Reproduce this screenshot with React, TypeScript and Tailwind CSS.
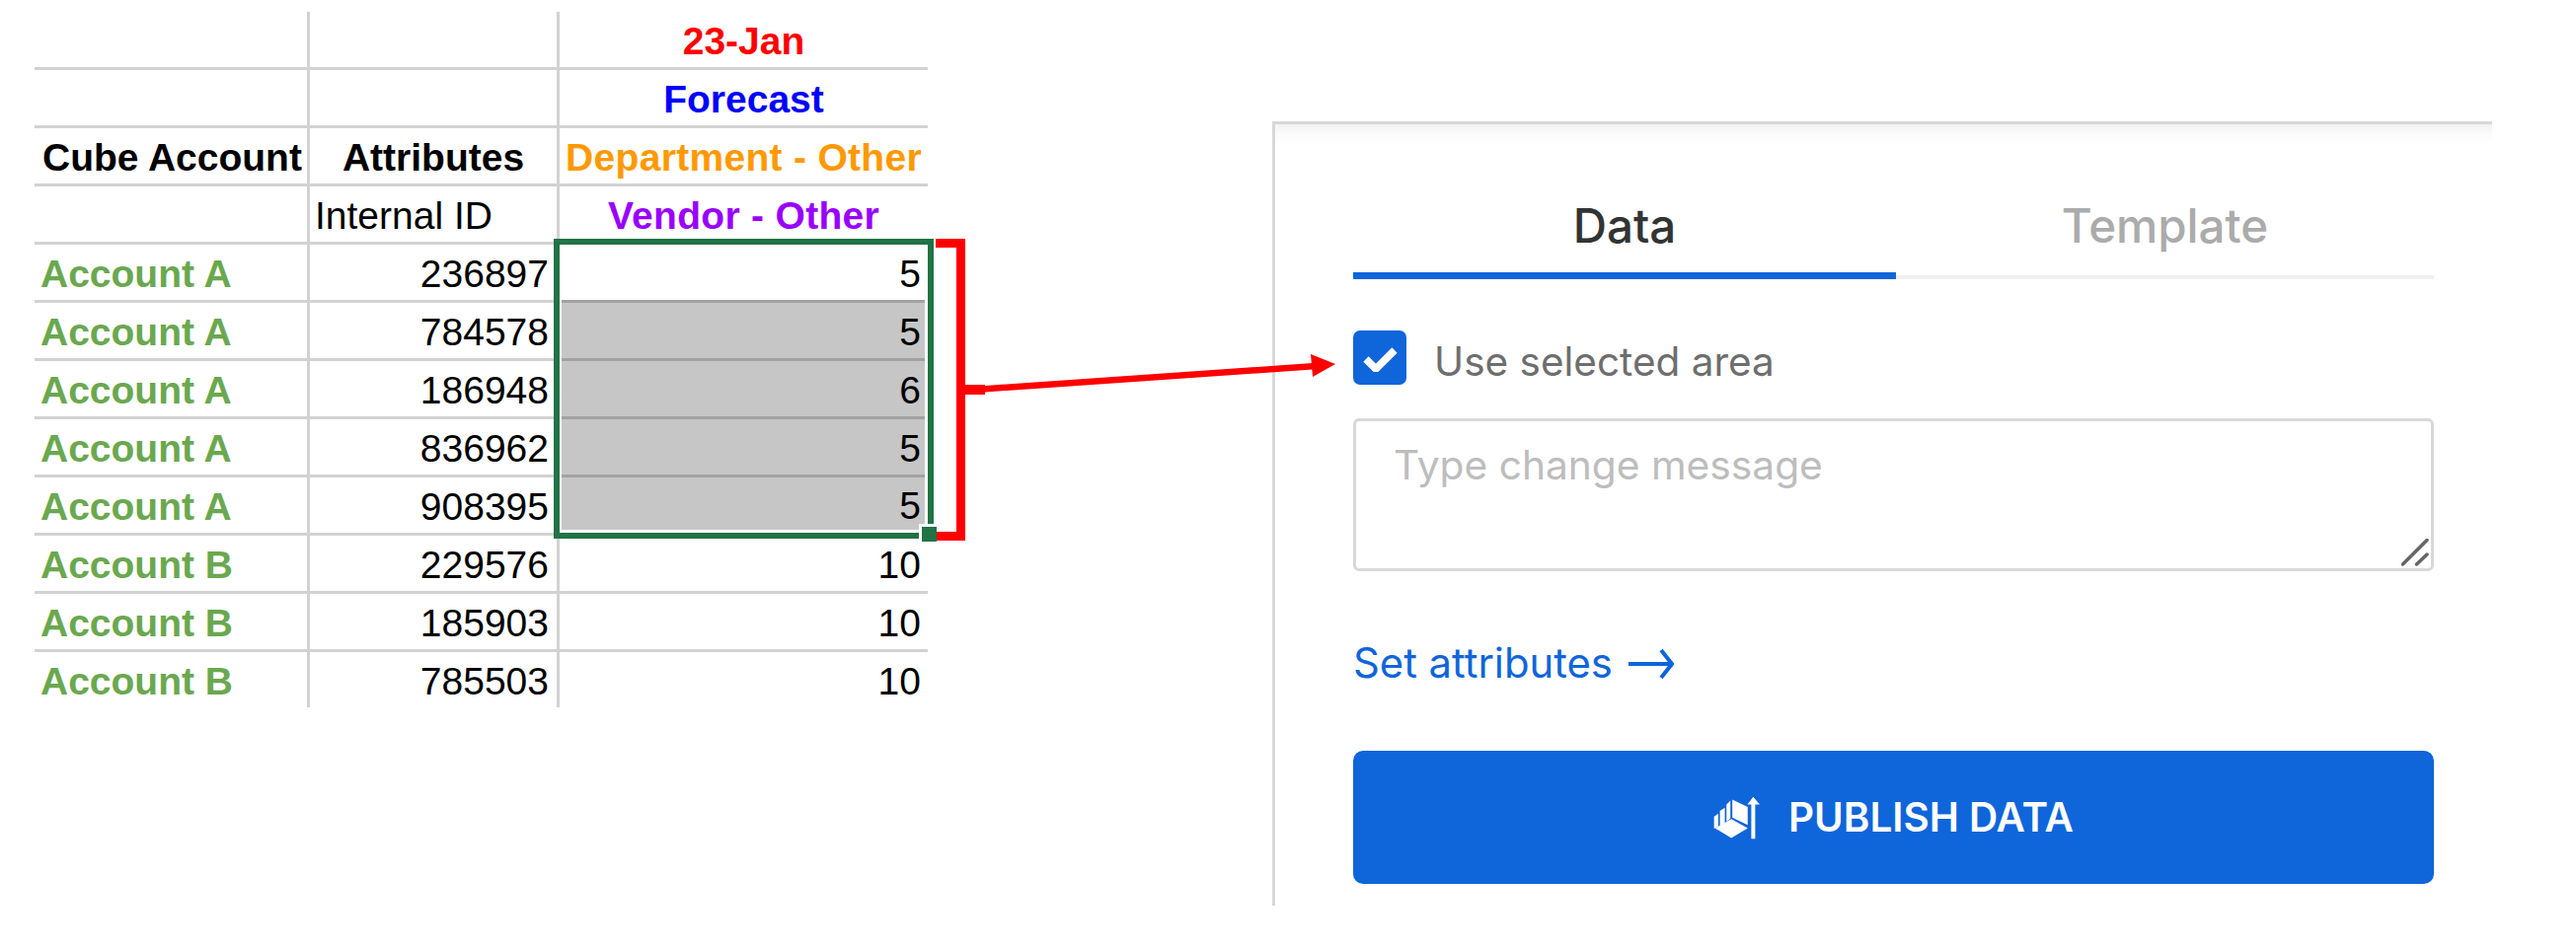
import React from "react";

const rows: [string, string, string][] = [
  ["Account A", "236897", "5"],
  ["Account A", "784578", "5"],
  ["Account A", "186948", "6"],
  ["Account A", "836962", "5"],
  ["Account A", "908395", "5"],
  ["Account B", "229576", "10"],
  ["Account B", "185903", "10"],
  ["Account B", "785503", "10"],
];

const line = "border-[#d2d2d2]";

function PublishIcon() {
  return (
    <svg width="48" height="44" viewBox="110 80 145 132" fill="#fff" aria-hidden="true">
      <polygon points="112,142 125,133 125,172 112,179" />
      <polygon points="130,125 145,115 145,162 130,170" />
      <polygon points="150,105 162,93 162,148 150,158" />
      <polygon points="168,90 215,113 215,168 168,145" />
      <polygon points="115,178 165,150 215,178 165,208" />
      <polygon points="226,105 214,105 232,82 252,105 238,105 238,210 226,210" />
    </svg>
  );
}

export default function App() {
  return (
    <div className="flex items-start w-[2610px] h-[964px] bg-white overflow-hidden font-['Liberation_Sans',Arial,sans-serif]">
      {/* Spreadsheet */}
      <div className="relative ml-[35px] mt-[12px] w-[905px] shrink-0 text-[39px] text-black">
        <div className="grid grid-cols-[279px_253px_373px]">
          {/* Row 1 */}
          <div className={`h-[59px] border-b-[3px] border-r-[3px] ${line}`} />
          <div className={`h-[59px] border-b-[3px] border-r-[3px] ${line}`} />
          <div className={`h-[59px] pt-[5px] border-b-[3px] ${line} flex items-center justify-center font-bold text-[#ff0000]`}>23-Jan</div>
          {/* Row 2 */}
          <div className={`h-[59px] border-b-[3px] border-r-[3px] ${line}`} />
          <div className={`h-[59px] border-b-[3px] border-r-[3px] ${line}`} />
          <div className={`h-[59px] pt-[5px] border-b-[3px] ${line} flex items-center justify-center font-bold text-[#0000ff]`}>Forecast</div>
          {/* Row 3 */}
          <div className={`h-[59px] pt-[5px] border-b-[3px] border-r-[3px] ${line} flex items-center pl-[8px] font-bold whitespace-nowrap`}>Cube Account</div>
          <div className={`h-[59px] pt-[5px] border-b-[3px] border-r-[3px] ${line} flex items-center justify-center font-bold`}>Attributes</div>
          <div className={`h-[59px] pt-[5px] border-b-[3px] ${line} flex items-center justify-center font-bold tracking-[0.3px] text-[#ff9900] whitespace-nowrap`}>Department - Other</div>
          {/* Row 4 */}
          <div className={`h-[59px] border-b-[3px] border-r-[3px] ${line}`} />
          <div className={`h-[59px] pt-[5px] border-b-[3px] border-r-[3px] ${line} flex items-center pl-[5px]`}>Internal ID</div>
          <div className={`h-[59px] pt-[5px] border-b-[3px] ${line} flex items-center justify-center font-bold tracking-[0.3px] text-[#9900ff]`}>Vendor - Other</div>
          {/* Data */}
          {rows.map(([account, id, value], i) => {
            const last = i === rows.length - 1;
            const selected = i < 5;
            const h = last ? "h-[56px] pt-[5px]" : "h-[59px] pt-[5px] border-b-[3px]";
            return (
              <React.Fragment key={i}>
                <div className={`${h} border-r-[3px] ${line} flex items-center pl-[6px] font-bold text-[#6aa84f]`}>{account}</div>
                <div className={`${h} border-r-[3px] ${line} flex items-center justify-end pr-[8px]`}>{id}</div>
                {selected ? (
                  <div className={`h-[59px] pl-[2px] pr-[3px] ${i === 4 ? "pb-[6px]" : ""}`}>
                    <div className={`h-full pt-[5px] flex items-center justify-end pr-[4px] ${i === 0 ? "bg-white" : "bg-[#c6c6c6]"} ${i < 4 ? "border-b-[3px] border-[#a2a2a2]" : ""}`}>{value}</div>
                  </div>
                ) : (
                  <div className={`${h} ${line} flex items-center justify-end pr-[7px]`}>{value}</div>
                )}
              </React.Fragment>
            );
          })}
        </div>

        {/* Selection rectangle, handle, bracket, arrow */}
        <div className="absolute left-[526px] top-[230px] w-[385px] h-[304px] border-[6px] border-[#217346]" />
        <div className="absolute left-[913px] top-[230px] w-[30px] h-[306px] border-y-[9px] border-r-[9px] border-[#ff0000]" />
        <div className="absolute left-[896px] top-[519px] w-[18px] h-[18px] bg-[#217346] border-l-[3px] border-t-[3px] border-white" />
        <svg className="absolute left-[943px] top-[338px] z-10 overflow-visible" width="380" height="60" viewBox="978 350 380 60" fill="#ff0000" aria-hidden="true">
          <rect x="978" y="390" width="20" height="10" />
          <polygon points="998,391 1330,368 1330,374.5 998,397.5" />
          <polygon points="1328,359 1353,369 1330,382" />
        </svg>
      </div>

      {/* Panel */}
      <div className="relative ml-[349px] mt-[123px] w-[1236px] h-[795px] shrink-0 border-l-[3px] border-t-[3px] border-[#d8d8d8] pl-[79px] pr-[59px] font-['Inter',sans-serif] shadow-[inset_0_24px_22px_-24px_rgba(0,0,0,0.1)]">
        {/* Tabs */}
        <div className="flex mt-[58px] h-[99px] text-[47.5px] font-medium leading-none">
          <div className="w-[550px] h-full flex items-start justify-center pt-[21px] text-[#333333] border-b-[7px] border-[#0f65da]">Data</div>
          <div className="flex-1 h-full flex items-start justify-center pt-[21px] text-[#ababab] border-b-[4px] border-[#f0f0f0]">Template</div>
        </div>

        {/* Checkbox */}
        <div className="flex items-center mt-[52px] gap-[28px]">
          <div className="w-[54px] h-[55px] rounded-[7px] bg-[#0f65da] flex items-center justify-center">
            <svg width="36" height="28" viewBox="0 0 36 28" fill="none" aria-hidden="true">
              <polyline points="4,15 14,25 33,6" stroke="#fff" strokeWidth="7.5" />
            </svg>
          </div>
          <span className="pt-[10px] text-[40.5px] text-[#6e6e6e] leading-none">Use selected area</span>
        </div>

        {/* Textarea */}
        <div className="relative mt-[34px] h-[155px] rounded-[6px] border-[3px] border-[#d8d8d8] pl-[38px] pt-[25px] text-[40.7px] leading-none text-[#bdbdbd]">
          Type change message
          <svg className="absolute right-[2px] bottom-[2px]" width="28" height="28" viewBox="0 0 28 28" fill="none" stroke="#666" strokeWidth="3.5" strokeLinecap="round" aria-hidden="true">
            <line x1="1.5" y1="26" x2="26" y2="1.5" />
            <line x1="15.5" y1="26" x2="26" y2="16" />
          </svg>
        </div>

        {/* Link */}
        <div className="flex items-center mt-[73px] h-[40px] pt-[2px] text-[41.8px] leading-none text-[#0f65da] whitespace-nowrap">
          Set attributes
          <svg className="ml-[16px]" width="46" height="30" viewBox="0 0 46 30" fill="none" stroke="#0f65da" strokeWidth="4" aria-hidden="true">
            <line x1="0" y1="15" x2="44" y2="15" />
            <polyline points="33,1 44,15 33,29" />
          </svg>
        </div>

        {/* Button */}
        <div className="mt-[69px] h-[135px] rounded-[10px] bg-[#0f65da] flex items-center justify-center gap-[28px] text-white text-[40.4px] font-semibold leading-none">
          <PublishIcon />
          <span className="pt-[2px]">PUBLISH DATA</span>
        </div>
      </div>
    </div>
  );
}
